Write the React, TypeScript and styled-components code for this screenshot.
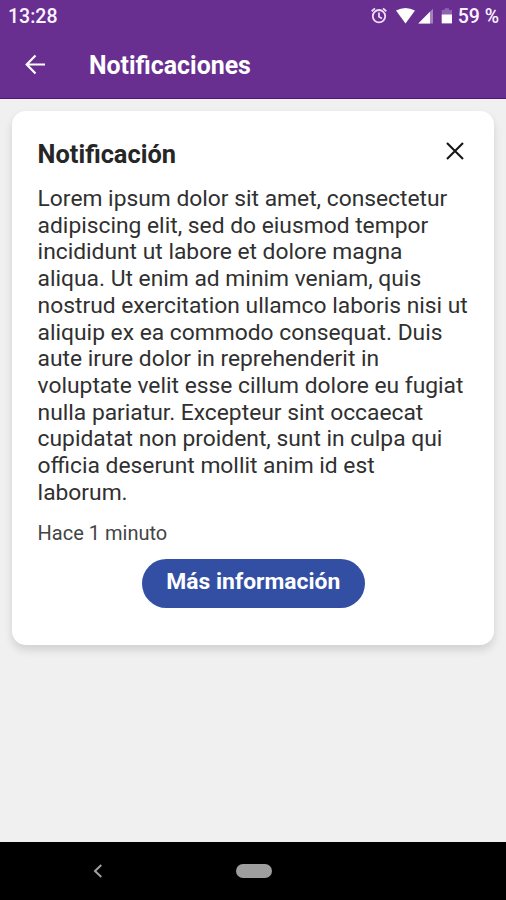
import React from 'react';
import styled, { createGlobalStyle } from 'styled-components';

const GlobalStyle = createGlobalStyle`
  *, *::before, *::after { box-sizing: border-box; }
  html, body { margin: 0; padding: 0; background: #f0f0f0; }
  body { font-family: Roboto, "Liberation Sans", sans-serif; }
  button { font: inherit; border: 0; padding: 0; background: none; }
  svg { display: block; flex: none; }
`;

const Screen = styled.div`
  display: flex;
  flex-direction: column;
  width: 506px;
  height: 900px;
  overflow: hidden;
  background: #f0f0f0;
`;

const Header = styled.header`
  height: 99px;
  flex: none;
  background: #682f90;
  border-bottom: 1px solid #4f1580;
  color: #fbf3ff;
`;

const StatusBar = styled.div`
  display: flex;
  align-items: center;
  justify-content: space-between;
  height: 33px;
  padding: 0 7px 0 8px;
  font-size: 19.5px;
  font-weight: 500;
  line-height: 33px;
`;

const StatusIcons = styled.div`
  display: flex;
  align-items: center;
`;

const Percent = styled.span`
  margin-left: 5px;
`;

const AppBar = styled.div`
  display: flex;
  align-items: center;
  height: 64px;
  padding-left: 24px;
`;

const IconButton = styled.button`
  display: flex;
  color: inherit;
`;

const AppTitle = styled.h1`
  margin: 2px 0 0 42px;
  font-size: 24.9px;
  font-weight: 700;
  line-height: 30px;
  color: #fff;
`;

const Content = styled.main`
  flex: 1;
  padding: 12px;
`;

const Card = styled.article`
  display: flex;
  flex-direction: column;
  height: 534px;
  width: 482px;
  padding: 29px 25px 0 25.6px;
  border-radius: 14px;
  background: #fff;
  color: #1c1c1c;
  box-shadow: 0 5px 9px rgba(0, 0, 0, 0.13);
`;

const CardHeader = styled.div`
  display: flex;
  align-items: flex-start;
  justify-content: space-between;
  height: 46px;
  padding-right: 5px;
`;

const CardTitle = styled.h2`
  margin: 0;
  font-size: 25.4px;
  font-weight: 700;
  line-height: 28px;
  color: #262626;
`;

const Message = styled.p`
  margin: 0;
  font-size: 22.8px;
  font-weight: 400;
  line-height: 26.7px;
  white-space: pre;
  color: #303030;
`;

const Time = styled.time`
  margin-top: 15px;
  font-size: 20px;
  font-weight: 400;
  line-height: 24px;
  color: #444;
`;

const MoreButton = styled.button`
  && {
    align-self: center;
    width: 223px;
    height: 49px;
    margin-top: 14px;
    padding-bottom: 4px;
    border-radius: 25px;
    background: #324fa4;
    color: #fff;
    font-size: 22.9px;
    font-weight: 700;
  }
`;

const NavBar = styled.nav`
  display: flex;
  align-items: center;
  flex: none;
  height: 58px;
  padding-left: 93px;
  background: #000;
  color: #a0a0a0;
`;

const HomePill = styled.span`
  width: 36px;
  height: 14px;
  margin-left: 133px;
  border-radius: 7px;
  background: #9e9e9e;
`;

const message = [
  'Lorem ipsum dolor sit amet, consectetur',
  'adipiscing elit, sed do eiusmod tempor',
  'incididunt ut labore et dolore magna',
  'aliqua. Ut enim ad minim veniam, quis',
  'nostrud exercitation ullamco laboris nisi ut',
  'aliquip ex ea commodo consequat. Duis',
  'aute irure dolor in reprehenderit in',
  'voluptate velit esse cillum dolore eu fugiat',
  'nulla pariatur. Excepteur sint occaecat',
  'cupidatat non proident, sunt in culpa qui',
  'officia deserunt mollit anim id est',
  'laborum.',
].join('\n');

const StatusGlyphs = () => (
  <svg width="84" height="20" viewBox="0 0 84 20" fill="none">
    <g stroke="#efdcfb" strokeWidth="1.8">
      <circle cx="10" cy="9.2" r="6.2" />
      <path d="M10 5.5v4.3l3 1.8M2.7 4.2 6 1.4M17.3 4.2 14 1.4" />
    </g>
    <path d="M27 3.5Q36.5-1.5 46 3.5L36.5 16.5Z" fill="#fff" />
    <path d="M64 1.8V16.5H49.3Z" fill="#a582bf" />
    <path d="M61 4.8V16.5H49.3Z" fill="#fff" />
    <path d="M72.7 3h3V1.3h4.3V3h3v6H72.7Z" fill="#8f63b0" />
    <path d="M72.7 7.5h10.3v8.9H72.7Z" fill="#fff" />
  </svg>
);

export default function App() {
  return (
    <>
      <GlobalStyle />
      <Screen>
        <Header>
          <StatusBar>
            <span>13:28</span>
            <StatusIcons>
              <StatusGlyphs />
              <Percent>59 %</Percent>
            </StatusIcons>
          </StatusBar>
          <AppBar>
            <IconButton aria-label="Volver">
              <svg width="23" height="22" viewBox="0 0 23 22" fill="none" stroke="#fff" strokeWidth="2.2">
                <path d="M21 10.5H3M11.5 1.5 2.7 10.5l8.8 9" />
              </svg>
            </IconButton>
            <AppTitle>Notificaciones</AppTitle>
          </AppBar>
        </Header>
        <Content>
          <Card>
            <CardHeader>
              <CardTitle>Notificación</CardTitle>
              <IconButton aria-label="Cerrar">
                <svg width="18" height="24" viewBox="0 0 18 24" fill="none" stroke="#161616" strokeWidth="2.1">
                  <path d="m1 3 16 16M17 3 1 19" />
                </svg>
              </IconButton>
            </CardHeader>
            <Message>{message}</Message>
            <Time>Hace 1 minuto</Time>
            <MoreButton>Más información</MoreButton>
          </Card>
        </Content>
        <NavBar>
          <svg width="10" height="14" viewBox="0 0 10 14" fill="none" stroke="currentColor" strokeWidth="2">
            <path d="M8.3 1 2 7l6.3 6" />
          </svg>
          <HomePill />
        </NavBar>
      </Screen>
    </>
  );
}
